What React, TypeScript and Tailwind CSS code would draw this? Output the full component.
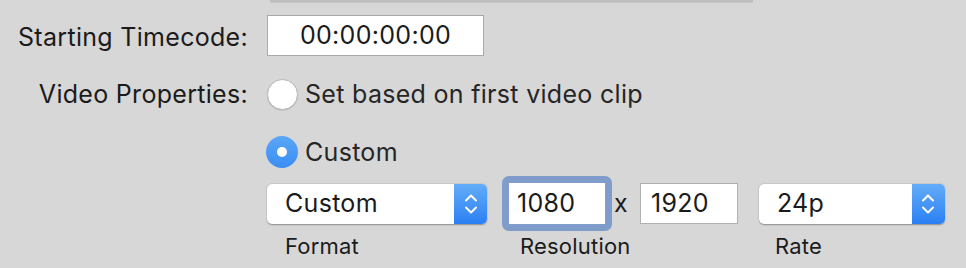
import React from "react";

const font = { fontFamily: "Inter, 'Liberation Sans', sans-serif", letterSpacing: "0.3px" };

// white up/down chevrons on the blue part of a popup button
const Stepper = () => (
	<div className="flex h-full w-[33px] items-center justify-center rounded-r-[5px] bg-gradient-to-b from-[#63acf8] to-[#2a7ff3]">
		<svg width="14" height="22" viewBox="0 0 14 22" fill="none">
			<path d="M2 7.5L7 2.5L12 7.5" stroke="white" strokeWidth="2" strokeLinecap="round" strokeLinejoin="round" />
			<path d="M2 14.5L7 19.5L12 14.5" stroke="white" strokeWidth="2" strokeLinecap="round" strokeLinejoin="round" />
		</svg>
	</div>
);

const Popup = ({ value, width }: { value: string; width: string }) => (
	<div className={`flex h-[40px] ${width} items-center rounded-[5px] bg-white shadow-[0_0.5px_1.5px_rgba(0,0,0,0.35)]`}>
		<span className="flex-1 pl-[18px] text-[25px] leading-none text-[#1b1b1b]">{value}</span>
		<Stepper />
	</div>
);

const Radio = ({ checked, label }: { checked?: boolean; label: string }) => (
	<div className="flex h-[32px] items-center">
		{checked ? (
			<div className="flex h-[32px] w-[32px] items-center justify-center rounded-full bg-gradient-to-b from-[#5aa6f8] to-[#3a8ef3]">
				<div className="h-[10px] w-[10px] rounded-full bg-white" />
			</div>
		) : (
			<div className="h-[31px] w-[31px] rounded-full border border-[#b9b9b9] bg-white shadow-[0_0.5px_1px_rgba(0,0,0,0.15)]" />
		)}
		<span className="ml-[7px] text-[25px] leading-none text-[#262626]">{label}</span>
	</div>
);

export default function App() {
	return (
		<div className="h-[268px] w-[966px] overflow-hidden bg-[#d7d7d7] text-[#1b1b1b]" style={font}>
			{/* bottom edge of the box above */}
			<div className="ml-[270px] h-[2px] w-[483px] bg-[#bdbdbd] shadow-[0_1px_1px_rgba(0,0,0,0.08)]" />

			<div className="mt-[13px] flex h-[41px] items-center">
				<div className="w-[248px] pt-[3px] text-right text-[25px] leading-none">Starting Timecode:</div>
				<div className="ml-[19px] flex h-[41px] w-[217px] items-center justify-center border border-[#a9a9a9] bg-white text-[25px] leading-none">
					00:00:00:00
				</div>
			</div>

			<div className="mt-[22px] flex h-[32px] items-center">
				<div className="w-[248px] text-right text-[25px] leading-none">Video Properties:</div>
				<div className="ml-[19px]">
					<Radio label="Set based on first video clip" />
				</div>
			</div>

			<div className="ml-[266px] mt-[26px]">
				<Radio checked label="Custom" />
			</div>

			<div className="ml-[267px] mt-[8px] flex h-[55px] items-center">
				<Popup value="Custom" width="w-[220px]" />
				<div className="ml-[15px] rounded-[7px] bg-[#7f9ccb] p-[7px]">
					<div className="flex h-[41px] w-[96px] items-center bg-white pl-[8px] text-[25px] leading-none">1080</div>
				</div>
				<span className="ml-[2px] text-[25px] leading-none">x</span>
				<div className="ml-[12px] flex h-[41px] w-[98px] items-center border border-[#b0b0b0] bg-white pl-[10px] text-[25px] leading-none">
					1920
				</div>
				<div className="ml-[21px]">
					<Popup value="24p" width="w-[186px]" />
				</div>
			</div>

			<div className="mt-[3px] flex text-[22px] leading-[24px] tracking-[0.2px] text-[#1b1b1b]">
				<span className="ml-[285px] w-[235px]">Format</span>
				<span className="w-[255px]">Resolution</span>
				<span>Rate</span>
			</div>
		</div>
	);
}
